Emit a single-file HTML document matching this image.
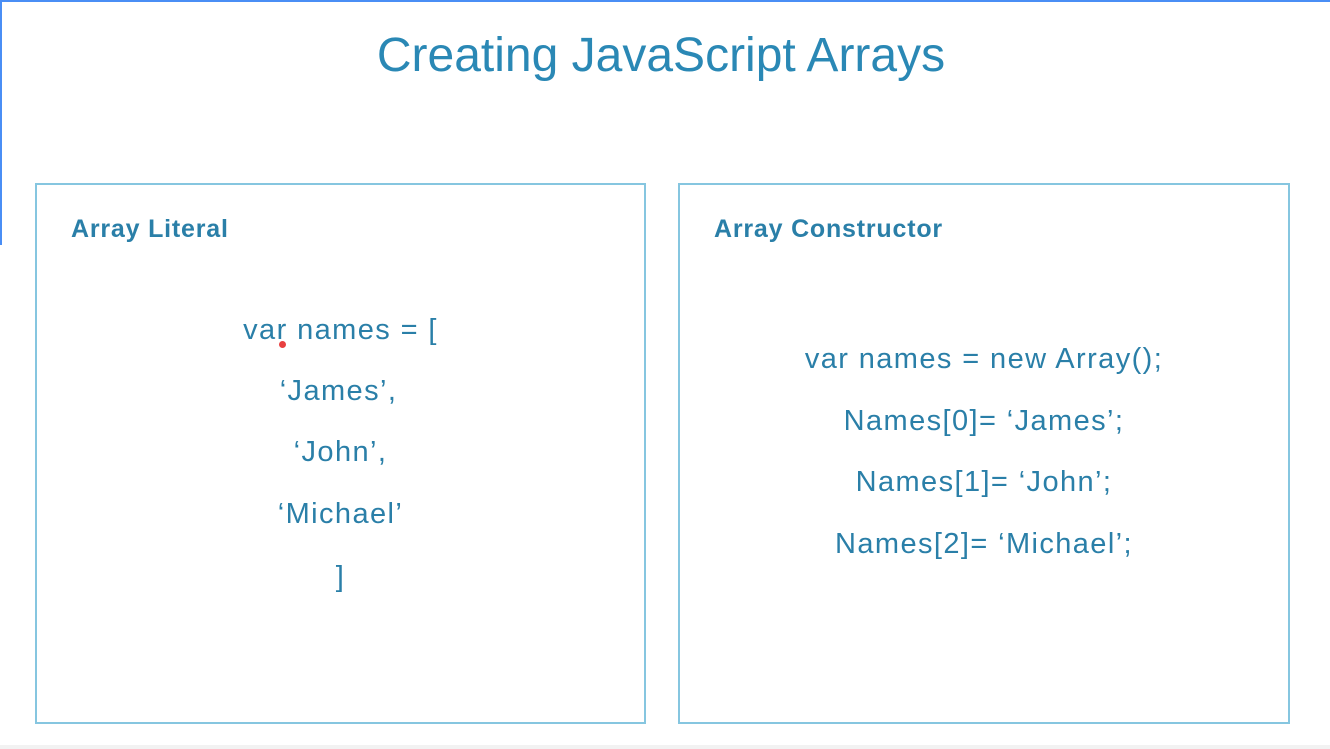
<!DOCTYPE html>
<html><head><style>
body{margin:0;width:1330px;height:749px;background:#fff;position:relative;overflow:hidden;font-family:"Liberation Sans",sans-serif;}
.top{position:absolute;left:0;top:0;width:1330px;height:2px;background:#4a8ef5}
.left{position:absolute;left:0;top:0;width:2px;height:245px;background:#4a8ef5}
.bot{position:absolute;left:0;top:745px;width:1330px;height:4px;background:#f2f2f2}
h1{position:absolute;left:0;width:1322px;top:28px;margin:0;text-align:center;font-weight:normal;font-size:48px;color:#2a88b5;letter-spacing:0px}
.box{position:absolute;top:183px;height:537px;border:2px solid #86c6e0}
.hd{position:absolute;top:30px;font-weight:bold;font-size:25px;color:#2a7fa8;letter-spacing:0.8px}
.ln{position:absolute;width:100%;text-align:center;font-size:29px;color:#2a7fa8;line-height:32px;letter-spacing:1.4px}
</style></head><body>
<div class="top"></div><div class="left"></div><div class="bot"></div>
<h1>Creating JavaScript Arrays</h1>
<div class="box" style="left:35px;width:607px">
 <div class="hd" style="left:34px">Array Literal</div>
 <div class="ln" style="top:129px">var names = [</div>
 <div class="ln" style="top:190px;left:-2px">‘James’,</div>
 <div class="ln" style="top:251px">‘John’,</div>
 <div class="ln" style="top:313px">‘Michael’</div>
 <div class="ln" style="top:376px">]</div>
 <div style="position:absolute;left:242px;top:156px;width:7px;height:7px;border-radius:50%;background:#e84040"></div>
</div>
<div class="box" style="left:678px;width:608px">
 <div class="hd" style="left:34px">Array Constructor</div>
 <div class="ln" style="top:158px">var names = new Array();</div>
 <div class="ln" style="top:220px">Names[0]= ‘James’;</div>
 <div class="ln" style="top:281px">Names[1]= ‘John’;</div>
 <div class="ln" style="top:343px">Names[2]= ‘Michael’;</div>
</div>
</body></html>
